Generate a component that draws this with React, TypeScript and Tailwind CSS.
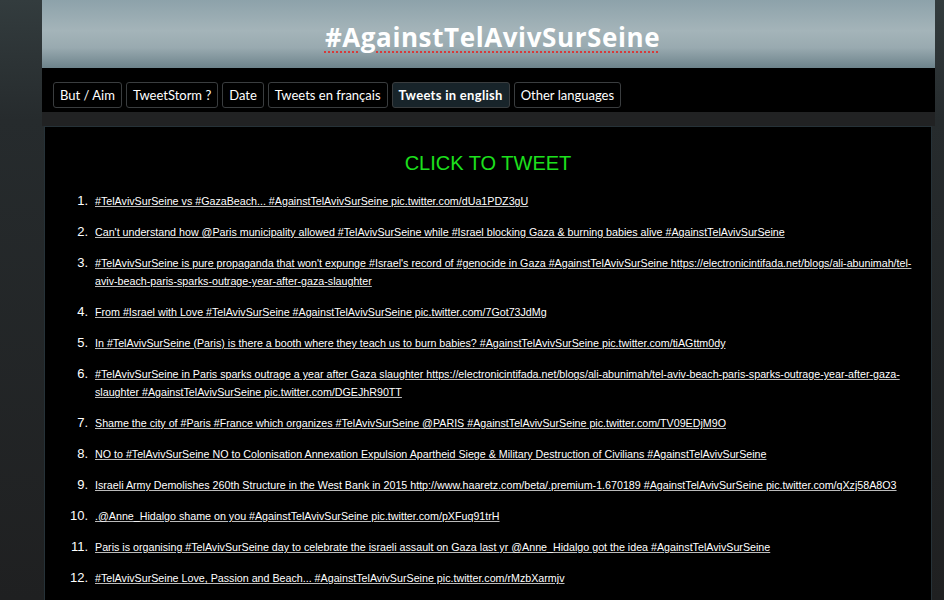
import React from "react"

const tabs = [
  { label: "But / Aim" },
  { label: "TweetStorm ?" },
  { label: "Date" },
  { label: "Tweets en français" },
  { label: "Tweets in english", active: true },
  { label: "Other languages" },
]

const tweets = [
  "#TelAvivSurSeine vs #GazaBeach... #AgainstTelAvivSurSeine pic.twitter.com/dUa1PDZ3gU",
  "Can't understand how @Paris municipality allowed #TelAvivSurSeine while #Israel blocking Gaza & burning babies alive #AgainstTelAvivSurSeine",
  "#TelAvivSurSeine is pure propaganda that won't expunge #Israel's record of #genocide in Gaza #AgainstTelAvivSurSeine https://electronicintifada.net/blogs/ali-abunimah/tel-aviv-beach-paris-sparks-outrage-year-after-gaza-slaughter",
  "From #Israel with Love #TelAvivSurSeine #AgainstTelAvivSurSeine pic.twitter.com/7Got73JdMg",
  "In #TelAvivSurSeine (Paris) is there a booth where they teach us to burn babies? #AgainstTelAvivSurSeine pic.twitter.com/tiAGttm0dy",
  "#TelAvivSurSeine in Paris sparks outrage a year after Gaza slaughter https://electronicintifada.net/blogs/ali-abunimah/tel-aviv-beach-paris-sparks-outrage-year-after-gaza-slaughter #AgainstTelAvivSurSeine pic.twitter.com/DGEJhR90TT",
  "Shame the city of #Paris #France which organizes #TelAvivSurSeine @PARIS #AgainstTelAvivSurSeine pic.twitter.com/TV09EDjM9O",
  "NO to #TelAvivSurSeine NO to Colonisation Annexation Expulsion Apartheid Siege & Military Destruction of Civilians #AgainstTelAvivSurSeine",
  "Israeli Army Demolishes 260th Structure in the West Bank in 2015 http://www.haaretz.com/beta/.premium-1.670189 #AgainstTelAvivSurSeine pic.twitter.com/qXzj58A8O3",
  ".@Anne_Hidalgo shame on you #AgainstTelAvivSurSeine pic.twitter.com/pXFuq91trH",
  "Paris is organising #TelAvivSurSeine day to celebrate the israeli assault on Gaza last yr @Anne_Hidalgo got the idea #AgainstTelAvivSurSeine",
  "#TelAvivSurSeine Love, Passion and Beach... #AgainstTelAvivSurSeine pic.twitter.com/rMzbXarmjv",
]

export default function App() {
  return (
    <div className="h-[600px] overflow-hidden bg-[linear-gradient(to_bottom,#333c3e_0px,#262b2d_120px,#1f2021_600px)] pl-[42px] pr-[9px]">
      <div className="flex flex-col">
        {/* header */}
        <div className="h-[68px] flex items-center justify-center bg-[linear-gradient(to_bottom,#8da2aa_0%,#a4b4b9_45%,#99aab0_70%,#6d838b_100%)]">
          <h1
            className="ml-[8px] text-white font-bold text-[26px] tracking-[0.6px] underline decoration-dotted decoration-[#d63a3a] decoration-[2px] underline-offset-[5px] mt-[6px]"
            style={{ fontFamily: "'Open Sans', 'DejaVu Sans', sans-serif" }}
          >
            #AgainstTelAvivSurSeine
          </h1>
        </div>

        {/* nav */}
        <div className="h-[44px] bg-black flex items-start gap-[4px] pt-[14px] pl-[11px]">
          {tabs.map((t) => (
            <button
              key={t.label}
              className={
                "h-[26px] px-[6px] rounded-[3px] border border-[#3a3d3f] text-white text-[13px] leading-none " +
                (t.active ? "bg-[#18242a] font-bold tracking-[0.3px]" : "bg-black")
              }
              style={{ fontFamily: "Lato, 'Open Sans', sans-serif" }}
            >
              {t.label}
            </button>
          ))}
        </div>

        <div className="h-[14px] bg-[#212223]" />

        {/* content */}
        <div className="ml-[2px] w-[888px] h-[480px] bg-black border border-[#263238] border-b-0" style={{ fontFamily: "'Liberation Sans', Arial, sans-serif" }}>
          <h2 className="text-center text-[#1de01d] text-[20px] leading-none mt-[26px]">CLICK TO TWEET</h2>
          <ol className="mt-[19px] pl-[25px] pr-[14px] flex flex-col gap-[13px]">
            {tweets.map((tw, i) => (
              <li key={i} className="flex items-baseline">
                <span className="w-[18px] shrink-0 text-right text-white text-[13px] leading-[18px]">{i + 1}.</span>
                <a href="#" className="ml-[7px] text-white text-[10.7px] leading-[18px] underline decoration-[#bbbbbb] underline-offset-[1px]">
                  {tw}
                </a>
              </li>
            ))}
          </ol>
        </div>
      </div>
    </div>
  )
}
